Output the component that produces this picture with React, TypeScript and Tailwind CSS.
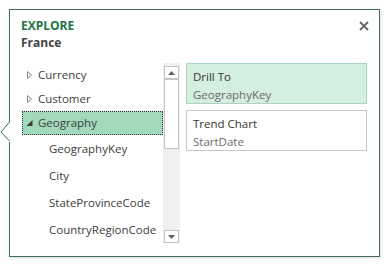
import React from 'react';

const font = { fontFamily: '"Open Sans", "Noto Sans", sans-serif' };

function TreeRow({ label, open, selected }: { label: string; open?: boolean; selected?: boolean }) {
  return (
    <div
      className={`h-[24px] flex items-center pl-[3px] ${
        selected ? 'bg-[#a2d9bb] border border-dotted border-[#333]' : 'border border-transparent'
      }`}
    >
      <svg width="8" height="10" viewBox="0 0 8 10" className="mr-[4px]">
        {open ? (
          <path d="M6.5 2 L6.5 8 L0.5 8 Z" fill="#3a3a3a" />
        ) : (
          <path d="M1.5 1.5 L5.5 5 L1.5 8.5 Z" fill="none" stroke="#8a8a8a" strokeWidth="1" />
        )}
      </svg>
      <span className="text-[11.5px] text-[#404040]">{label}</span>
    </div>
  );
}

function SubRow({ label }: { label: string }) {
  return (
    <div className="h-[27px] flex items-center pl-[27px] text-[11.5px] text-[#404040]">{label}</div>
  );
}

function ScrollBtn({ up }: { up?: boolean }) {
  return (
    <div className="w-[15px] h-[13px] border border-[#c4c4c4] bg-white flex items-center justify-center">
      <svg width="7" height="4" viewBox="0 0 7 4">
        {up ? <path d="M0 4 L3.5 0 L7 4 Z" fill="#606060" /> : <path d="M0 0 L3.5 4 L7 0 Z" fill="#606060" />}
      </svg>
    </div>
  );
}

function ActionCard({ title, sub, active }: { title: string; sub: string; active?: boolean }) {
  return (
    <div
      className={`h-[41px] border px-[6px] pt-[4px] leading-[18px] text-[11.5px] ${
        active ? 'bg-[#d4eedf] border-[#a8d6bc]' : 'bg-white border-[#c6c6c6]'
      }`}
    >
      <div className="text-[#333]">{title}</div>
      <div className="text-[#6b6b6b]">{sub}</div>
    </div>
  );
}

export default function App() {
  return (
    <div className="w-[389px] h-[267px] bg-white relative" style={font}>
      <div className="absolute left-[9px] top-[9px] w-[371px] h-[248px] border border-[#3f6e58] bg-white shadow-[1px_1px_3px_rgba(0,0,0,0.15)]">
        <div className="flex items-start justify-between pl-[11px] pr-[10px] pt-[8px]">
          <div>
            <div className="text-[12px] font-bold leading-[16px] text-[#217346]">EXPLORE</div>
            <div className="text-[12px] font-bold leading-[18px] text-[#444]">France</div>
          </div>
          <svg width="10" height="10" viewBox="0 0 10 10" className="mt-[3px]">
            <path d="M1 1 L9 9 M9 1 L1 9" stroke="#6a6a6a" strokeWidth="2" />
          </svg>
        </div>

        <div className="flex pl-[12px] mt-[11px]">
          <div className="w-[141px]">
            <TreeRow label="Currency" />
            <TreeRow label="Customer" />
            <TreeRow label="Geography" open selected />
            <SubRow label="GeographyKey" />
            <SubRow label="City" />
            <SubRow label="StateProvinceCode" />
            <SubRow label="CountryRegionCode" />
          </div>
          <div className="w-[17px] h-[180px] bg-[#f0f0f0] flex flex-col items-center pt-[3px]">
            <ScrollBtn up />
            <div className="w-[15px] h-[70px] border border-[#c4c4c4] bg-white" />
            <div className="flex-1" />
            <ScrollBtn />
          </div>
          <div className="w-[181px] ml-[6px] flex flex-col gap-[6px]">
            <ActionCard title="Drill To" sub="GeographyKey" active />
            <ActionCard title="Trend Chart" sub="StartDate" />
          </div>
        </div>
      </div>

      <svg className="absolute left-0 top-[121px]" width="11" height="22" viewBox="0 0 11 22">
        <rect x="9" y="1" width="2" height="20" fill="white" />
        <path d="M9.5 1 L1 11 L9.5 20" fill="white" stroke="#3f6e58" strokeWidth="1" />
      </svg>
    </div>
  );
}
